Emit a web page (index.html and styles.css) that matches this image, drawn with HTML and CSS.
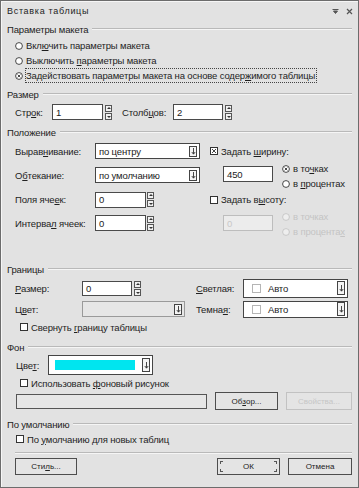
FILE: index.html
```html
<!DOCTYPE html>
<html lang="ru">
<head>
<meta charset="utf-8">
<title>Вставка таблицы</title>
<link rel="stylesheet" href="styles.css">
</head>
<body>
<div class="dlg">
  <div class="titlebar">
    <span class="title">Вставка таблицы</span>
    <span class="tb-icons">
      <svg width="7" height="7" viewBox="0 0 7 7"><path d="M0.5 1.5h6M1.5 3l2 2.5 2-2.5z" stroke="#555" fill="#555" stroke-width="1"/></svg>
      <svg width="7" height="7" viewBox="0 0 7 7"><path d="M1 1l5 5M6 1l-5 5" stroke="#555" stroke-width="1.2"/></svg>
    </span>
  </div>

  <div class="hdr"><span>Параметры макета</span><i></i></div>
  <div class="opt mt1"><svg class="rd" width="8" height="8" viewBox="0 0 8 8"><circle cx="4" cy="4" r="3.4" fill="#fff" stroke="#333" stroke-width="0.9"/></svg><span>Вкл<u>ю</u>чить параметры макета</span></div>
  <div class="opt"><svg class="rd" width="8" height="8" viewBox="0 0 8 8"><circle cx="4" cy="4" r="3.4" fill="#fff" stroke="#333" stroke-width="0.9"/></svg><span>Выключить <u>п</u>араметры макета</span></div>
  <div class="opt"><svg class="rd" width="8" height="8" viewBox="0 0 8 8"><circle cx="4" cy="4" r="3.4" fill="#fff" stroke="#333" stroke-width="0.9"/><path d="M2.6 2.6l2.8 2.8M5.4 2.6l-2.8 2.8" stroke="#333" stroke-width="0.9"/></svg><span class="focus">Задействовать параметры макета на основе содер<u>ж</u>имого таблицы</span></div>

  <div class="hdr mt3"><span>Размер</span><i></i></div>
  <div class="row h20">
    <span class="lbl w37">Стр<u>о</u>к:</span>
    <span class="inp w51">1</span>
    <span class="spin"><b class="up"></b><b class="dn"></b></span>
    <span class="lbl w51 ml10">Столб<u>ц</u>ов:</span>
    <span class="inp w50">2</span>
    <span class="spin"><b class="up"></b><b class="dn"></b></span>
  </div>

  <div class="hdr mt2"><span>Положение</span><i></i></div>
  <div class="prow mt1 h20 ac">
    <div class="pleft ac">
      <span class="lbl w80">Вырав<u>н</u>ивание:</span>
      <span class="sel w105">по центру<b class="dd"><svg width="5" height="9" viewBox="0 0 5 9"><path d="M2.5 1v6M0.8 5l1.7 2.2 1.7-2.2" stroke="#333" fill="none" stroke-width="0.9"/></svg></b></span>
    </div>
    <div class="pright ac">
      <svg class="cb" width="8" height="8" viewBox="0 0 8 8"><rect x="0.5" y="0.5" width="7" height="7" fill="#fff" stroke="#333"/><path d="M2 2l4 4M6 2l-4 4" stroke="#333" stroke-width="0.9"/></svg>
      <span>Задать <u>ш</u>ирину:</span>
    </div>
  </div>
  <div class="prow h29">
    <div class="pleft ac mt6">
      <span class="lbl w80">О<u>б</u>текание:</span>
      <span class="sel w105">по умолчанию<b class="dd"><svg width="5" height="9" viewBox="0 0 5 9"><path d="M2.5 1v6M0.8 5l1.7 2.2 1.7-2.2" stroke="#333" fill="none" stroke-width="0.9"/></svg></b></span>
    </div>
    <div class="pright">
      <span class="inp w50 ml13 mt5">450</span>
      <div class="rcol">
        <div class="ropt"><svg class="rd" width="8" height="8" viewBox="0 0 8 8"><circle cx="4" cy="4" r="3.4" fill="#fff" stroke="#333" stroke-width="0.9"/><path d="M2.6 2.6l2.8 2.8M5.4 2.6l-2.8 2.8" stroke="#333" stroke-width="0.9"/></svg><span>в то<u>ч</u>ках</span></div>
        <div class="ropt"><svg class="rd" width="8" height="8" viewBox="0 0 8 8"><circle cx="4" cy="4" r="3.4" fill="#fff" stroke="#333" stroke-width="0.9"/></svg><span>в <u>п</u>роцентах</span></div>
      </div>
    </div>
  </div>
  <div class="prow h19 ac">
    <div class="pleft ac">
      <span class="lbl w80">Поля яче<u>е</u>к:</span>
      <span class="inp w51">0</span>
      <span class="spin sp1"><b class="up"></b><b class="dn"></b></span>
    </div>
    <div class="pright ac">
      <svg class="cb" width="8" height="8" viewBox="0 0 8 8"><rect x="0.5" y="0.5" width="7" height="7" fill="#fff" stroke="#333"/></svg>
      <span>Задать в<u>ы</u>соту:</span>
    </div>
  </div>
  <div class="prow h31">
    <div class="pleft ac mt6">
      <span class="lbl w80">Интерва<u>л</u> ячеек:</span>
      <span class="inp w51">0</span>
      <span class="spin sp1"><b class="up"></b><b class="dn"></b></span>
    </div>
    <div class="pright">
      <span class="inp w50 ml13 mt6 dis">0</span>
      <div class="rcol">
        <div class="ropt dis"><svg class="rd" width="8" height="8" viewBox="0 0 8 8"><circle cx="4" cy="4" r="3.4" fill="#eee" stroke="#c4c4c4" stroke-width="0.9"/></svg><span>в точках</span></div>
        <div class="ropt dis"><svg class="rd" width="8" height="8" viewBox="0 0 8 8"><circle cx="4" cy="4" r="3.4" fill="#eee" stroke="#c4c4c4" stroke-width="0.9"/></svg><span>в процента<u>х</u></span></div>
      </div>
    </div>
  </div>

  <div class="hdr mt21"><span>Границы</span><i></i></div>
  <div class="row mt1 h20">
    <div class="bleft ac">
      <span class="lbl w67"><u>Р</u>азмер:</span>
      <span class="inp w50 h15">0</span>
      <span class="spin"><b class="up"></b><b class="dn"></b></span>
    </div>
    <span class="lbl w47"><u>С</u>ветлая:</span>
    <span class="sel csel w105">
      <i class="sw"></i><span class="cl">Авто</span>
      <b class="dd tall"><svg width="5" height="9" viewBox="0 0 5 9"><path d="M2.5 1v6M0.8 5l1.7 2.2 1.7-2.2" stroke="#333" fill="none" stroke-width="0.9"/></svg></b>
    </span>
  </div>
  <div class="row mt1 h20">
    <div class="bleft ac">
      <span class="lbl w67">Ц<u>в</u>ет:</span>
      <span class="sel w103 seldis"><b class="dd"><svg width="5" height="9" viewBox="0 0 5 9"><path d="M2.5 1v6M0.8 5l1.7 2.2 1.7-2.2" stroke="#333" fill="none" stroke-width="0.9"/></svg></b></span>
    </div>
    <span class="lbl w47">Темна<u>я</u>:</span>
    <span class="sel csel h17 w105">
      <i class="sw"></i><span class="cl">Авто</span>
      <b class="dd tall"><svg width="5" height="9" viewBox="0 0 5 9"><path d="M2.5 1v6M0.8 5l1.7 2.2 1.7-2.2" stroke="#333" fill="none" stroke-width="0.9"/></svg></b>
    </span>
  </div>
  <div class="chkrow mt1 x20">
    <svg class="cb" width="8" height="8" viewBox="0 0 8 8"><rect x="0.5" y="0.5" width="7" height="7" fill="#fff" stroke="#333"/></svg>
    <span>Свернуть <u>г</u>раницу таблицы</span>
  </div>

  <div class="hdr mt5"><span>Фон</span><i></i></div>
  <div class="row h20 x16">
    <span class="lbl w32">Цве<u>т</u>:</span>
    <span class="sel cyansel w105">
      <i class="cyan"></i>
      <b class="dd tall"><svg width="5" height="9" viewBox="0 0 5 9"><path d="M2.5 1v6M0.8 5l1.7 2.2 1.7-2.2" stroke="#333" fill="none" stroke-width="0.9"/></svg></b>
    </span>
  </div>
  <div class="chkrow mt1 x20">
    <svg class="cb" width="8" height="8" viewBox="0 0 8 8"><rect x="0.5" y="0.5" width="7" height="7" fill="#fff" stroke="#333"/></svg>
    <span>Использовать <u>ф</u>оновый рисунок</span>
  </div>
  <div class="row mt2 h18 x16">
    <span class="inp w191 h15 picinp"></span>
    <span class="btn w63 ml8">Об<u>з</u>ор...</span>
    <span class="btn w66 ml8 btndis">Свойства...</span>
  </div>

  <div class="hdr mt6"><span>По умолчанию</span><i></i></div>
  <div class="chkrow x16">
    <svg class="cb" width="8" height="8" viewBox="0 0 8 8"><rect x="0.5" y="0.5" width="7" height="7" fill="#fff" stroke="#333"/></svg>
    <span>По <u>у</u>молчанию для новых таблиц</span>
  </div>
  <div class="sep"></div>
  <div class="btnrow">
    <span class="btn w62">Сти<u>л</u>ь...</span>
    <span class="btns">
      <span class="btn w63 okbtn">ОК</span>
      <span class="btn w64">Отмена</span>
    </span>
  </div>
</div>
</body>
</html>
```

FILE: styles.css
```css
* { box-sizing: border-box; margin: 0; padding: 0; }
body {
  margin: 0;
  background: #ffffff;
  font-family: "Liberation Sans", Arial, sans-serif;
  font-size: 9.5px;
  letter-spacing: -0.15px;
  color: #1e1e1e;
}
u { text-decoration: underline; text-underline-offset: 1px; }

.dlg {
  width: 359px;
  height: 488px;
  background: #e2e2e2;
  border: 1px solid #6c6c6c;
  box-shadow: inset 1px 1px 0 #f6f6f6;
  display: flex;
  flex-direction: column;
}

.titlebar {
  height: 20px;
  display: flex;
  align-items: center;
  justify-content: space-between;
  padding: 0 5px 0 6px;
}
.title { font-size: 9px; letter-spacing: 0.7px; color: #222; }
.tb-icons { display: flex; gap: 7px; align-items: center; }

.hdr {
  height: 16px;
  display: flex;
  align-items: center;
  padding: 0 6px;
  color: #222;
}
.hdr i {
  flex: 1;
  height: 2px;
  border-top: 1px solid #b9b9b9;
  border-bottom: 1px solid #f5f5f5;
  margin-left: 4px;
}

.opt {
  height: 15px;
  display: flex;
  align-items: center;
  padding-left: 14px;
}
.rd { flex: none; margin-right: 3px; }
.cb { flex: none; margin-right: 3px; }
.focus { outline: 1px dotted #444; outline-offset: 0; padding: 1px 1px 1px 0; }

.mt1 { margin-top: 1px; }
.mt2 { margin-top: 2px; }
.mt3 { margin-top: 3px; }
.mt5 { margin-top: 5px; }
.mt6 { margin-top: 6px; }
.mt21 { margin-top: 21px; }
.ml8 { margin-left: 8px; }
.ml10 { margin-left: 10px; }
.ml13 { margin-left: 13px; }

.h17 { height: 17px !important; }
.h18 { height: 18px; }
.h19 { height: 19px; }
.h20 { height: 20px; }
.h29 { height: 29px; }
.h31 { height: 31px; }
.h15 { height: 15px !important; }

.w32 { width: 32px; }
.w37 { width: 37px; }
.w47 { width: 47px; }
.w50 { width: 50px; }
.w51 { width: 51px; }
.w62 { width: 62px; }
.w63 { width: 63px; }
.w64 { width: 64px; }
.w66 { width: 66px; }
.w67 { width: 67px; }
.w80 { width: 80px; }
.w103 { width: 103px; }
.w105 { width: 105px; }
.w191 { width: 191px; }

.row {
  display: flex;
  align-items: center;
  padding-left: 14px;
}
.row.x16 { padding-left: 15px; }
.ac { align-items: center; }

.lbl { flex: none; color: #222; }

.inp {
  flex: none;
  display: flex;
  align-items: center;
  height: 16px;
  background: #fff;
  border: 1px solid #4a4a4a;
  padding-left: 3px;
  color: #222;
}
.inp.dis { background: #ececec; border-color: #bdbdbd; color: #c8c8c8; }

.spin {
  flex: none;
  display: flex;
  flex-direction: column;
  gap: 1px;
  margin-left: 2px;
}
.spin.sp1 { margin-left: 1px; }
.spin b {
  position: relative;
  width: 7px;
  height: 7px;
  border: 1px solid #555;
  background: #f0f0f0;
}
.spin b::after {
  content: "";
  position: absolute;
  left: 1px;
  border-left: 2px solid transparent;
  border-right: 2px solid transparent;
}
.spin .up::after { top: 1px; border-bottom: 2px solid #333; }
.spin .dn::after { top: 2px; border-top: 2px solid #333; }

.sel {
  flex: none;
  display: flex;
  align-items: center;
  height: 16px;
  background: #fff;
  border: 1px solid #454545;
  padding-left: 3px;
  color: #222;
}
.sel.seldis { background: #e6e6e6; border-color: #9a9a9a; height: 16px; }
.dd {
  flex: none;
  display: flex;
  align-items: center;
  justify-content: center;
  margin-left: auto;
  margin-right: 2px;
  width: 8px;
  height: 11px;
  border: 1px solid #444;
  background: #f4f4f4;
}
.dd.tall { height: 14px; }

.csel { height: 19px; padding-left: 8px; }
.sw {
  flex: none;
  width: 9px;
  height: 9px;
  background: #fff;
  border: 1px solid #b5b5b5;
}
.cl { margin-left: 7px; }

.cyansel { height: 20px; padding-left: 6px; }
.cyan {
  flex: none;
  width: 80px;
  height: 10px;
  background: #00e5ef;
}

.prow {
  display: flex;
  padding-left: 14px;
}
.prow.ac { align-items: center; }
.pleft {
  flex: none;
  width: 195px;
  display: flex;
  align-self: flex-start;
}
.prow.ac .pleft { align-self: center; }
.pright {
  display: flex;
  align-items: flex-start;
}
.pright.ac { align-items: center; }
.rcol { margin-left: 9px; display: flex; flex-direction: column; }
.ropt { height: 15px; display: flex; align-items: center; }
.ropt.dis { color: #c4c4c4; }

.bleft {
  flex: none;
  width: 181px;
  display: flex;
}

.chkrow {
  height: 14px;
  display: flex;
  align-items: center;
  padding-left: 15px;
}
.chkrow.x20 { padding-left: 19px; }

.picinp { background: #e6e6e6; border-color: #555; }

.btn {
  flex: none;
  display: flex;
  align-items: center;
  justify-content: center;
  height: 18px;
  border: 1px solid #4d4d4d;
  background: #e4e4e4;
  font-size: 8px;
  letter-spacing: 0;
  color: #222;
}
.btndis { border-color: #c2c2c2; color: #c6c6c6; }

.sep {
  margin: 6px 6px 0 14px;
  height: 2px;
  border-top: 1px solid #b9b9b9;
  border-bottom: 1px solid #f5f5f5;
}
.btnrow {
  margin-top: 4px;
  display: flex;
  justify-content: space-between;
  padding: 0 6px 0 14px;
}
.btnrow .btn { height: 17px; }
.btns { display: flex; gap: 8px; }
.okbtn { position: relative; }
.okbtn::before {
  content: "";
  position: absolute;
  inset: 2px;
  background:
    linear-gradient(#555, #555) left top / 3px 1px no-repeat,
    linear-gradient(#555, #555) left top / 1px 3px no-repeat,
    linear-gradient(#555, #555) right top / 3px 1px no-repeat,
    linear-gradient(#555, #555) right top / 1px 3px no-repeat,
    linear-gradient(#555, #555) left bottom / 3px 1px no-repeat,
    linear-gradient(#555, #555) left bottom / 1px 3px no-repeat,
    linear-gradient(#555, #555) right bottom / 3px 1px no-repeat,
    linear-gradient(#555, #555) right bottom / 1px 3px no-repeat;
}
```
